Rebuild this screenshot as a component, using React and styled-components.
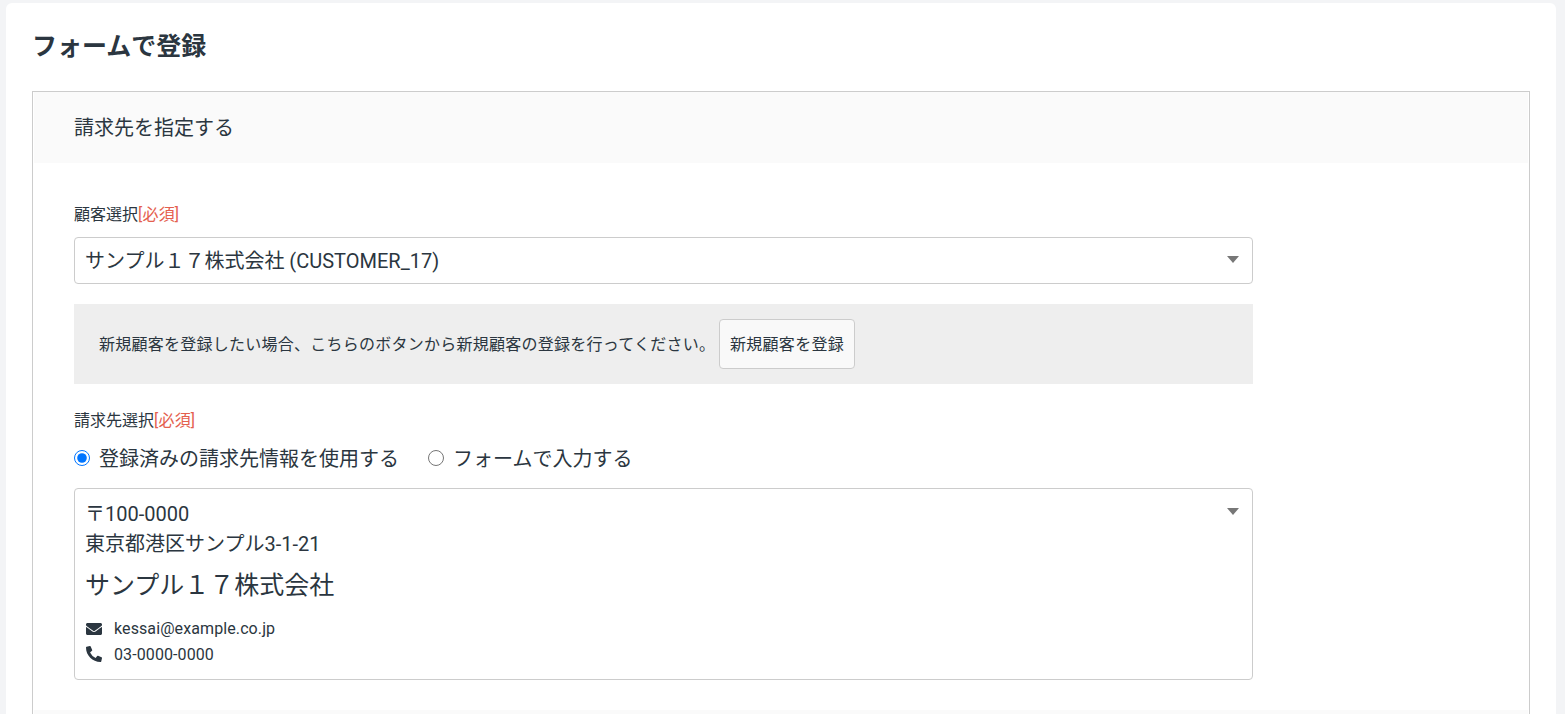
import styled, { createGlobalStyle } from "styled-components";
import { FaEnvelope, FaPhoneAlt } from "react-icons/fa";

const Global = createGlobalStyle`
  html, body {
    margin: 0;
    height: 714px;
    overflow: hidden;
    background: #f3f4f6;
    color: #2b3640;
    font-family: Roboto, "Noto Sans CJK JP", sans-serif;
  }
`;

const Card = styled.div`
  margin: 3px 9px 0 6px;
  height: 760px;
  padding: 0 26px;
  background: #fff;
  border-radius: 6px;
`;

const Title = styled.h1`
  margin: 0;
  height: 88px;
  line-height: 88px;
  font-size: 25px;
  font-weight: 700;
`;

const Section = styled.section`
  border: 1px solid #ccc;
  height: 700px;
`;

const SectionHeader = styled.div`
  height: 71px;
  margin: 0 1px;
  padding-left: 40px;
  line-height: 73px;
  background: #fafafa;
  font-size: 20px;
`;

const SectionBody = styled.div`
  width: 1179px;
  height: 510px;
  padding: 37px 0 0 41px;
`;

const Label = styled.div`
  height: 28px;
  line-height: 30px;
  font-size: 16px;
`;

const Required = styled.span`
  color: #e4604e;
  letter-spacing: 0.2px;
`;

const SelectBox = styled.div`
  position: relative;
  box-sizing: border-box;
  border: 1px solid #ccc;
  border-radius: 4px;
  margin-top: ${props => props.$open ? "15px" : "9px"};
  padding: ${props => props.$open ? "10px 10px" : "0 10px"};
  height: ${props => props.$open ? "192px" : "47px"};
  line-height: ${props => props.$open ? "normal" : "46px"};
  font-size: 20px;
`;

const Arrow = styled.span`
  position: absolute;
  top: ${props => props.$top}px;
  right: 13px;
  border-style: solid;
  border-width: 7px 6px 0;
  border-color: #777 transparent transparent;
`;

const InfoBar = styled.div`
  display: flex;
  align-items: center;
  height: 80px;
  margin: 20px 0 22px;
  padding-left: 25px;
  background: #eee;
  font-size: 16px;
  letter-spacing: 0.25px;
`;

const InfoText = styled.span`
  width: 620px;
  padding-bottom: 3px;
`;

const Button = styled.button`
  box-sizing: border-box;
  width: 136px;
  height: 50px;
  padding: 0 0 3px;
  border: 1px solid #ccc;
  border-radius: 4px;
  background: #f9f9f9;
  color: inherit;
  font: inherit;
  letter-spacing: 0.3px;
`;

const RadioRow = styled.div`
  display: flex;
  align-items: center;
  gap: 29px;
  height: 32px;
  margin-top: 7px;
`;

const RadioLabel = styled.label`
  display: flex;
  align-items: center;
  gap: 9px;
  font-size: 20px;
`;

const RadioInput = styled.input`
  width: 16px;
  height: 16px;
  margin: 2px 0 0;
  accent-color: #0075ff;
`;

const AddressLine = styled.div`
  height: 30px;
  line-height: 30px;
  font-size: 20px;
`;

const CompanyName = styled.div`
  height: 40px;
  margin-top: 7px;
  line-height: 40px;
  font-size: 25px;
`;

const Contacts = styled.div`
  margin-top: 10px;
  padding-left: 1px;
`;

const ContactRow = styled.div`
  display: flex;
  align-items: center;
  gap: 12px;
  height: 25.5px;
  font-size: 16px;
  letter-spacing: 0.1px;
  svg {
    width: 16px;
    height: 16px;
  }
`;

export default function App() {
  return (
    <>
      <Global />
      <Card>
        <Title>フォームで登録</Title>
        <Section>
          <SectionHeader>請求先を指定する</SectionHeader>
          <SectionBody>
            <Label>顧客選択<Required>[必須]</Required></Label>
            <SelectBox>
              サンプル１７株式会社 (CUSTOMER_17)
              <Arrow $top={18} />
            </SelectBox>
            <InfoBar>
              <InfoText>新規顧客を登録したい場合、こちらのボタンから新規顧客の登録を行ってください。</InfoText>
              <Button>新規顧客を登録</Button>
            </InfoBar>
            <Label>請求先選択<Required>[必須]</Required></Label>
            <RadioRow>
              <RadioLabel><RadioInput type="radio" name="billing" defaultChecked />登録済みの請求先情報を使用する</RadioLabel>
              <RadioLabel><RadioInput type="radio" name="billing" />フォームで入力する</RadioLabel>
            </RadioRow>
            <SelectBox $open>
              <AddressLine>〒100-0000</AddressLine>
              <AddressLine>東京都港区サンプル3-1-21</AddressLine>
              <CompanyName>サンプル１７株式会社</CompanyName>
              <Contacts>
                <ContactRow><FaEnvelope />kessai@example.co.jp</ContactRow>
                <ContactRow><FaPhoneAlt />03-0000-0000</ContactRow>
              </Contacts>
              <Arrow $top={19} />
            </SelectBox>
          </SectionBody>
          <SectionHeader />
        </Section>
      </Card>
    </>
  );
}
